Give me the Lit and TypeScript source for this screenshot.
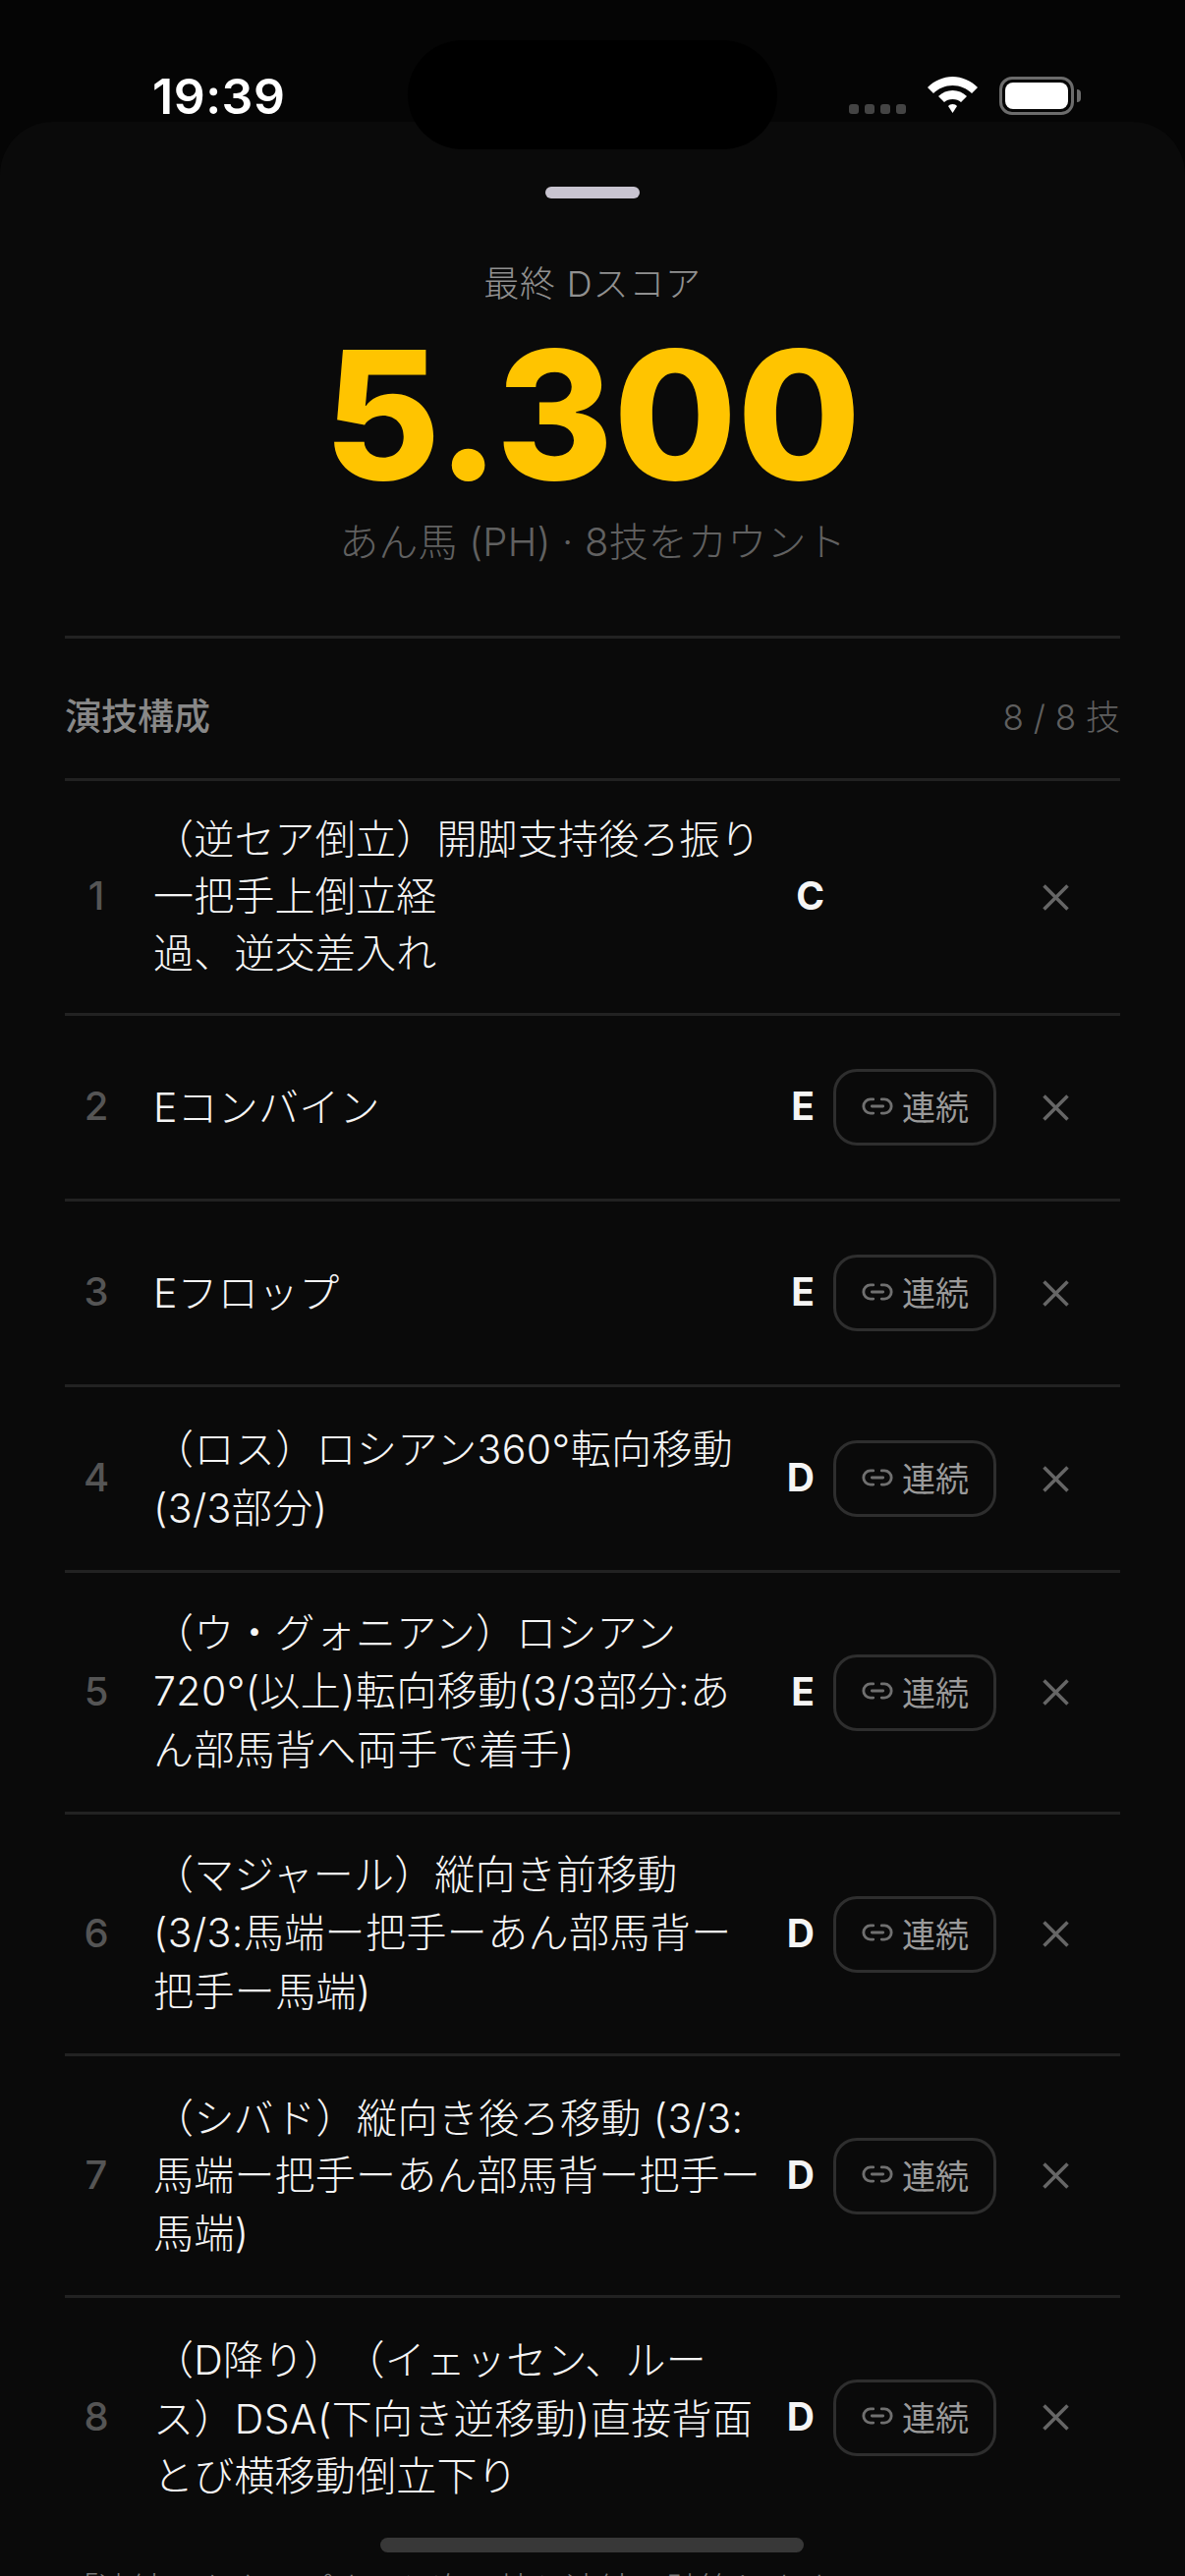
import {LitElement, html, css, svg} from 'lit';
import {customElement} from 'lit/decorators.js';

interface Skill {
    lines: string[];
    grade: string;
    linkable: boolean;
}

const skills: Skill[] = [
    {lines: ['（逆セア倒立）開脚支持後ろ振り', '一把手上倒立経', '過、逆交差入れ'], grade: 'C', linkable: false},
    {lines: ['Eコンバイン'], grade: 'E', linkable: true},
    {lines: ['Eフロップ'], grade: 'E', linkable: true},
    {lines: ['（ロス）ロシアン360°転向移動', '(3/3部分)'], grade: 'D', linkable: true},
    {lines: ['（ウ・グォニアン）ロシアン', '720°(以上)転向移動(3/3部分:あ', 'ん部馬背へ両手で着手)'], grade: 'E', linkable: true},
    {lines: ['（マジャール）縦向き前移動', '(3/3:馬端ー把手ーあん部馬背ー', '把手ー馬端)'], grade: 'D', linkable: true},
    {lines: ['（シバド）縦向き後ろ移動 (3/3:', '馬端ー把手ーあん部馬背ー把手ー', '馬端)'], grade: 'D', linkable: true},
    {lines: ['（D降り）（イェッセン、ルー', 'ス）DSA(下向き逆移動)直接背面', 'とび横移動倒立下り'], grade: 'D', linkable: true},
];

// lines with latin text sit a little taller than pure kana lines in the reference
const hasLatin = (line: string) => /[A-Za-z0-9()]/.test(line);
const hasDigits = (line: string) => /[0-9()]/.test(line);

const linkIcon = svg`<path d="M9 17H7A5 5 0 0 1 7 7h2"/><path d="M15 7h2a5 5 0 1 1 0 10h-2"/><line x1="8" y1="12" x2="16" y2="12"/>`;

@customElement('app-root')
export class AppRoot extends LitElement {

    static override styles = css`
        :host {
            display: block;
            width: 1206px;
            height: 2622px;
            overflow: hidden;
            position: relative;
            background: #050505;
            font-family: Inter, 'Noto Sans CJK JP', sans-serif;
            text-spacing-trim: space-all;
        }
        .status {
            height: 124px;
            display: flex;
            align-items: flex-start;
            justify-content: space-between;
            box-sizing: border-box;
            padding: 0 113px 0 155px;
        }
        .time {
            margin-top: 68px;
            font-size: 50px;
            line-height: 60px;
            font-weight: 600;
            color: #fff;
            letter-spacing: 0.5px;
        }
        .indicators {
            display: flex;
            align-items: flex-start;
            margin-top: 78px;
        }
        .dots {
            display: flex;
            gap: 6px;
            margin-top: 28px;
            margin-right: 22px;
        }
        .dots i {
            width: 10px;
            height: 10px;
            border-radius: 3px;
            background: #444;
        }
        .wifi {
            width: 51px;
            height: 38px;
            margin-right: 22px;
        }
        .battery {
            width: 76px;
            height: 39px;
            box-sizing: border-box;
            border: 3px solid #6c6c6c;
            border-radius: 13px;
            padding: 3px;
            position: relative;
        }
        .battery b {
            display: block;
            height: 100%;
            background: #fff;
            border-radius: 8px;
        }
        .battery::after {
            content: '';
            position: absolute;
            right: -10px;
            top: 10px;
            width: 4px;
            height: 13px;
            border-radius: 0 4px 4px 0;
            background: #6c6c6c;
        }
        .island {
            position: absolute;
            left: 415px;
            top: 41px;
            width: 376px;
            height: 111px;
            border-radius: 56px;
            background: #000;
            z-index: 2;
        }
        .sheet {
            background: #0a0a0a;
            border-radius: 54px 54px 0 0;
            padding: 66px 66px 0;
        }
        .handle {
            width: 96px;
            height: 12px;
            border-radius: 6px;
            background: #c8c4d0;
            margin: 0 auto;
        }
        .summary {
            display: flex;
            flex-direction: column;
            align-items: center;
            padding-top: 63px;
            height: 448px;
            box-sizing: border-box;
            border-bottom: 3px solid #222;
        }
        .label {
            font-size: 36px;
            line-height: 48px;
            font-weight: 300;
            letter-spacing: 0.8px;
            color: #909090;
        }
        .score {
            font-size: 182px;
            line-height: 216px;
            font-weight: 800;
            color: #ffc400;
            margin-top: 1px;
        }
        .sub {
            font-size: 40px;
            line-height: 52px;
            font-weight: 300;
            letter-spacing: 0.2px;
            color: #616161;
            margin-top: -4px;
        }
        .list-head {
            height: 145px;
            box-sizing: border-box;
            padding-top: 12px;
            display: flex;
            align-items: center;
            justify-content: space-between;
            border-bottom: 3px solid #222;
        }
        .list-title {
            font-size: 37px;
            font-weight: 500;
            color: #888;
        }
        .list-count {
            font-size: 35px;
            font-weight: 300;
            color: #5f5f5f;
        }
        .row {
            display: flex;
            align-items: center;
            box-sizing: border-box;
            min-height: 189px;
            padding: 30px 0;
            border-bottom: 3px solid #222;
        }
        .row.last {
            border-bottom: none;
        }
        .num {
            width: 90px;
            padding-right: 26px;
            margin-bottom: 3px;
            box-sizing: border-box;
            text-align: center;
            font-size: 40px;
            font-weight: 500;
            color: #555;
        }
        .name {
            flex: 1;
            font-size: 41px;
            font-weight: 300;
            letter-spacing: 0.2px;
            color: #f5f5f5;
            white-space: nowrap;
        }
        .name.three {
            min-height: 176px;
            display: flex;
            flex-direction: column;
            justify-content: center;
        }
        .name.three.mixed {
            min-height: 183px;
        }
        .line {
            line-height: 57.7px;
        }
        .line.latin {
            line-height: 60px;
        }
        .line.digits {
            letter-spacing: 0.4px;
        }
        .grade {
            font-size: 39px;
            font-weight: 700;
            color: #f5f5f5;
            margin-bottom: 3px;
        }
        .link {
            width: 166px;
            height: 78px;
            box-sizing: border-box;
            margin-left: 19px;
            padding-bottom: 3px;
            border: 3px solid #2e2e2e;
            border-radius: 24px;
            display: flex;
            align-items: center;
            justify-content: center;
            gap: 8px;
            font-size: 34px;
            color: #9a9a9a;
        }
        .link svg {
            width: 34px;
            height: 34px;
            fill: none;
            stroke: #707070;
            stroke-width: 2;
            stroke-linecap: round;
            stroke-linejoin: round;
        }
        .no-link {
            width: 175px;
        }
        .close {
            width: 27px;
            height: 27px;
            margin: 0 52px 0 47px;
            stroke: #666;
            stroke-width: 3.6;
            flex: none;
        }
        .note {
            margin-top: 30px;
            font-size: 34px;
            line-height: 48px;
            font-weight: 300;
            color: #777;
        }
        .home {
            position: absolute;
            left: 387px;
            top: 2583px;
            width: 431px;
            height: 15px;
            border-radius: 8px;
            background: #383838;
        }
    `;

    override render() {
        return html`
        <div class="island"></div>
        <div class="status">
            <span class="time">19:39</span>
            <div class="indicators">
                <div class="dots"><i></i><i></i><i></i><i></i></div>
                <svg class="wifi" viewBox="0 0 51 38" fill="#fff">
                    <path d="M25.5 0C35 0 44 4 51 11L45 17C40 12 33 9 25.5 9S11 12 6 17L0 11C7 4 16 0 25.5 0Z"/>
                    <path d="M25.5 14C31 14 36 16 40 20L34 26C32 24 29 23 25.5 23S19 24 17 26L11 20C15 16 20 14 25.5 14Z"/>
                    <path d="M25.5 28C27.5 28 29 28.700 30 30L25.500 37L21 30C22 28.700 23.500 28 25.500 28Z"/>
                </svg>
                <div class="battery"><b></b></div>
            </div>
        </div>
        <div class="sheet">
            <div class="handle"></div>
            <div class="summary">
                <span class="label">最終 Dスコア</span>
                <span class="score">5.300</span>
                <span class="sub">あん馬 (PH) · 8技をカウント</span>
            </div>
            <div class="list-head">
                <span class="list-title">演技構成</span>
                <span class="list-count">8 / 8 技</span>
            </div>
            ${skills.map((s, i) => html`
            <div class="row ${i === skills.length - 1 ? 'last' : ''}">
                <span class="num">${i + 1}</span>
                <div class="name ${s.lines.length === 3 ? 'three' : ''} ${s.lines.some(hasLatin) ? 'mixed' : ''}">
                    ${s.lines.map(l => html`<div class="line ${hasLatin(l) ? 'latin' : ''} ${hasDigits(l) ? 'digits' : ''}">${l}</div>`)}
                </div>
                <span class="grade">${s.grade}</span>
                ${s.linkable
                    ? html`<div class="link"><svg viewBox="0 0 24 24">${linkIcon}</svg>連続</div>`
                    : html`<div class="no-link"></div>`}
                <svg class="close" viewBox="0 0 27 27"><line x1="1.500" y1="1.500" x2="25.500" y2="25.500"/><line x1="25.500" y1="1.500" x2="1.500" y2="25.500"/></svg>
            </div>`)}
            <div class="note">「連続」をタップすると次の技と連続で計算します</div>
        </div>
        <div class="home"></div>
        `;
    }
}
